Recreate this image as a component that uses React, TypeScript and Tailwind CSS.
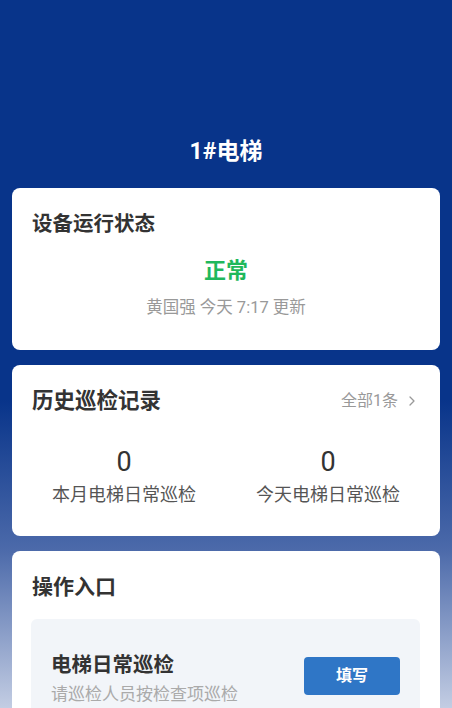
import React from "react";

const font = { fontFamily: 'Roboto, "Noto Sans CJK SC", "Noto Sans", sans-serif' };

export default function App() {
  return (
    <div
      className="h-[708px] w-full overflow-hidden bg-[linear-gradient(to_bottom,#08348a_0px,#08348a_400px,#4c6aaa_550px,#c3cde3_708px)]"
      style={font}
    >
      <div className="pt-[135px] text-center text-[23px] font-bold leading-[34px] text-white">
        1#电梯
      </div>
      <div className="mt-[19px] flex flex-col gap-[15px] px-3">
        <div className="h-[162px] rounded-lg bg-white px-5 pt-[22px]">
          <div className="text-[20.5px] font-bold leading-[28px] text-[#333]">设备运行状态</div>
          <div className="mt-[19px] text-center text-[22px] font-bold leading-[28px] text-[#1fb85c]">正常</div>
          <div className="mt-[11px] text-center text-[16.5px] leading-[24px] text-[#999]">黄国强 今天 7:17 更新</div>
        </div>
        <div className="h-[171px] rounded-lg bg-white pt-[22px]">
          <div className="flex items-center justify-between px-5">
            <div className="text-[21.5px] font-bold leading-[28px] text-[#333]">历史巡检记录</div>
            <div className="flex items-center gap-[10px] pr-1 text-[16px] leading-[24px] text-[#999]">
              <span>全部1条</span>
              <svg width="8" height="12" viewBox="0 0 8 12" fill="none">
                <path d="M2 2l4 4-4 4" stroke="#999" strokeWidth="1.3" strokeLinecap="round" strokeLinejoin="round" />
              </svg>
            </div>
          </div>
          <div className="mt-[30px] grid grid-cols-2 px-[10px]">
            <div className="flex flex-col items-center">
              <div className="text-[27px] leading-[34px] text-[#333]">0</div>
              <div className="mt-[3px] text-[18px] leading-[26px] text-[#555]">本月电梯日常巡检</div>
            </div>
            <div className="flex flex-col items-center">
              <div className="text-[27px] leading-[34px] text-[#333]">0</div>
              <div className="mt-[3px] text-[18px] leading-[26px] text-[#555]">今天电梯日常巡检</div>
            </div>
          </div>
        </div>
        <div className="rounded-lg bg-white px-5 pt-[22px] pb-5">
          <div className="text-[21px] font-bold leading-[28px] text-[#333]">操作入口</div>
          <div className="mt-[18px] ml-[-1px] flex items-center justify-between rounded-md bg-[#f2f5f9] pl-5 pr-5 pt-[32px] pb-5">
            <div>
              <div className="text-[20.5px] font-bold leading-[28px] text-[#333]">电梯日常巡检</div>
              <div className="mt-[3px] text-[17px] leading-[24px] text-[#aaa]">请巡检人员按检查项巡检</div>
            </div>
            <button className="mt-[-6px] h-[38px] w-[96px] rounded bg-[#2f76c6] text-[16px] font-bold text-white">填写</button>
          </div>
        </div>
      </div>
    </div>
  );
}
